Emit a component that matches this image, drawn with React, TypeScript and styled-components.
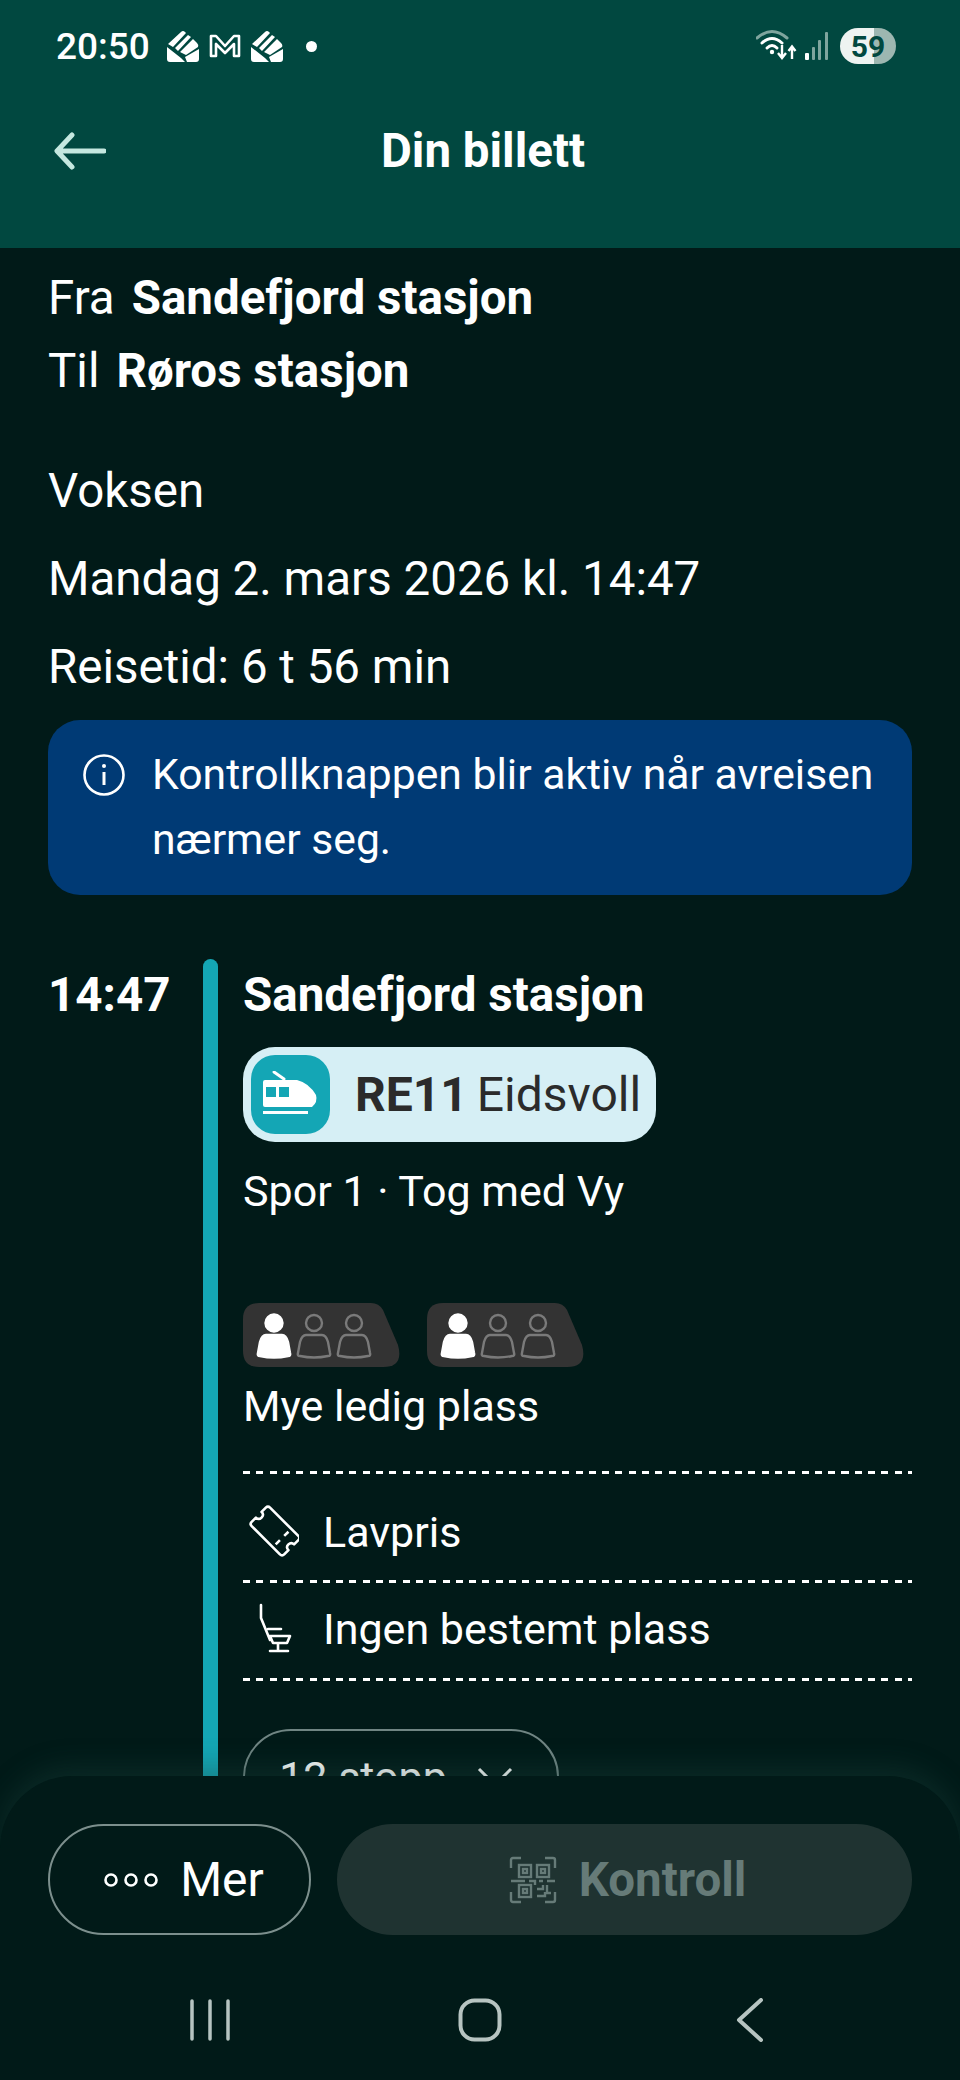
import React from 'react';
import styled, { createGlobalStyle } from 'styled-components';

const GlobalStyle = createGlobalStyle`
  html, body {
    margin: 0;
    padding: 0;
    background: #011a18;
  }
  * {
    box-sizing: border-box;
  }
`;

const Page = styled.div`
  width: 960px;
  height: 2080px;
  display: flex;
  flex-direction: column;
  overflow: hidden;
  background: #011a18;
  color: #ffffff;
  font-family: Roboto, 'Liberation Sans', sans-serif;
  font-size: 43px;
`;

const Header = styled.header`
  height: 248px;
  flex: none;
  background: #014840;
  display: flex;
  flex-direction: column;
  position: relative;
  z-index: 1;
`;

const StatusBar = styled.div`
  height: 92px;
  padding: 0 64px 0 56px;
  display: flex;
  align-items: center;
  justify-content: space-between;
`;

const StatusGroup = styled.div`
  display: flex;
  align-items: center;
`;

const Clock = styled.span`
  font-size: 37px;
  font-weight: 500;
  margin-right: 17px;
`;

const Battery = styled.div`
  width: 56px;
  height: 36px;
  margin-left: 10px;
  border-radius: 18px;
  background: linear-gradient(90deg, #eef3f1 0 60%, #9db7b1 60% 100%);
  color: #014840;
  font-size: 30px;
  font-weight: 700;
  display: flex;
  align-items: center;
  justify-content: center;
`;

const TitleBar = styled.div`
  height: 118px;
  padding: 0 48px 0 54px;
  display: flex;
  align-items: center;
  position: relative;
`;

const Title = styled.h1`
  flex: 1;
  margin: 0 0 0 -52px;
  text-align: center;
  font-size: 47.5px;
  font-weight: 700;
`;

const Content = styled.main`
  flex: 1;
  min-height: 0;
  overflow: hidden;
  padding: 14px 48px 0;
`;

const RouteLine = styled.div`
  height: 73px;
  line-height: 73px;
  font-size: 47.5px;
  display: flex;
  gap: 17px;
`;

const Strong = styled.strong`
  font-weight: 700;
`;

const MetaList = styled.div`
  margin-top: 39px;
  font-size: 47.5px;
`;

const Meta = styled.div`
  height: 88px;
  line-height: 88px;
`;

const Notice = styled.div`
  margin-top: 9px;
  height: 175px;
  padding: 22px 20px 0 35px;
  border-radius: 32px;
  background: #003a75;
  font-size: 42.7px;
  display: flex;
  gap: 27px;
  line-height: 65px;
`;

const NoticeIcon = styled.svg`
  flex: none;
  width: 42px;
  height: 42px;
  margin-top: 12px;
`;

const Timeline = styled.section`
  margin-top: 64px;
  display: grid;
  grid-template-columns: 155px 15px 1fr;
`;

const Time = styled.div`
  font-size: 47.5px;
  font-weight: 700;
  line-height: 73px;
`;

const Rail = styled.div`
  background: #14a6b5;
  border-radius: 8px 8px 0 0;
`;

const Leg = styled.div`
  padding-left: 25px;
`;

const Stop = styled.div`
  font-size: 47.5px;
  font-weight: 700;
  line-height: 73px;
`;

const LinePill = styled.div`
  margin-top: 15px;
  width: 413px;
  height: 95px;
  padding: 8px;
  border-radius: 32px;
  background: #d6eff5;
  color: #2b2b2b;
  font-size: 48px;
  word-spacing: -3px;
  display: flex;
  align-items: center;
  gap: 25px;
  white-space: nowrap;
`;

const LineIcon = styled.div`
  width: 79px;
  height: 79px;
  border-radius: 24px;
  background: #14a6b5;
  display: flex;
  align-items: center;
  justify-content: center;
`;

const LineText = styled.span`
  font-weight: 400;
  & b {
    font-weight: 700;
  }
`;

const Platform = styled.div`
  margin-top: 13px;
  line-height: 72px;
`;

const CrowdRow = styled.div`
  margin-top: 76px;
  display: flex;
  gap: 26px;
`;

const CrowdText = styled.div`
  margin-top: 9px;
  line-height: 60px;
  padding-bottom: 35px;
`;

const dashes = `repeating-linear-gradient(90deg, #ffffff 0 7px, transparent 7px 13.3px) top left / 100% 3px no-repeat`;

const InfoRow = styled.div<{ $first?: boolean }>`
  background: ${dashes};
  height: ${(p) => (p.$first ? 109 : 98)}px;
  padding-top: ${(p) => (p.$first ? 12 : 0)}px;
  display: flex;
  align-items: center;
  gap: 24px;
`;

const InfoIcon = styled.svg`
  flex: none;
  width: 56px;
  height: 56px;
`;

const RowsEnd = styled.div`
  height: 3px;
  background: ${dashes};
`;

const StopsButton = styled.button`
  margin-top: 48px;
  width: 316px;
  height: 96px;
  padding: 0 10px 0 0;
  border: 2px solid #708583;
  border-radius: 48px;
  background: transparent;
  color: #ffffff;
  font: inherit;
  display: flex;
  align-items: center;
  justify-content: center;
  gap: 30px;
`;

const BottomPanel = styled.div`
  flex: none;
  height: 304px;
  position: relative;
  z-index: 1;
  background: #011a18;
  border-radius: 72px 72px 0 0;
  box-shadow: 0 -10px 26px rgba(30, 70, 64, 0.35);
  padding: 48px 48px 0;
`;

const Actions = styled.div`
  display: flex;
  gap: 26px;
`;

const MoreButton = styled.button`
  width: 263px;
  height: 111px;
  padding: 0 0 0 8px;
  border: 2px solid #7c8f8d;
  border-radius: 56px;
  background: transparent;
  color: #ffffff;
  font: inherit;
  font-size: 48px;
  display: flex;
  align-items: center;
  justify-content: center;
  gap: 21px;
`;

const ControlButton = styled.button`
  flex: 1;
  height: 111px;
  padding: 0 0 0 6px;
  border: none;
  border-radius: 56px;
  background: #1f3331;
  color: #667b78;
  font: inherit;
  font-size: 47.5px;
  font-weight: 700;
  display: flex;
  align-items: center;
  justify-content: center;
  gap: 22px;
`;

const NavBar = styled.nav`
  margin-top: 40px;
  height: 90px;
  display: flex;
  align-items: center;
  justify-content: center;
`;

const NavSlot = styled.div`
  width: 270px;
  display: flex;
  justify-content: center;
`;

const Dot = styled.span`
  width: 11px;
  height: 11px;
  margin-left: 23px;
  border-radius: 50%;
  background: #fff;
`;

const HandIcon = () => (
  <svg width="32" height="32" viewBox="0 0 32 32">
    <path d="M1 14 L14 2 Q16 0 18 2 L19 3 L6 17 Z M8 18 L21 5 L24 7 L11 21 Z M13 22 L26 9 L30 13 Q32 15 31 17 L19 25 Z" fill="#fff" />
    <path d="M0 17 L14 28 L18 32 L3 32 Q0 32 0 29 Z M20 32 L18 27 L32 19 L32 29 Q32 32 29 32 Z" fill="#fff" />
  </svg>
);

const MailIcon = () => (
  <svg width="32" height="24" viewBox="0 0 32 24" style={{ margin: '0 10px' }}>
    <path d="M2 22 V2 H7 L16 12 L25 2 H30 V22 H25 V10 L16 19 L7 10 V22 Z" fill="none" stroke="#fff" strokeWidth="2.6" strokeLinejoin="round" />
  </svg>
);

const WifiIcon = () => (
  <svg width="42" height="36" viewBox="0 0 42 36">
    <path d="M1 10 Q16 -3 31 10" fill="none" stroke="#7fa59e" strokeWidth="3" strokeLinecap="round" />
    <path d="M6 15 Q16 6 26 15" fill="none" stroke="#fff" strokeWidth="3" strokeLinecap="round" />
    <path d="M11 20 Q16 15 21 20" fill="none" stroke="#fff" strokeWidth="3" strokeLinecap="round" />
    <circle cx="16" cy="24" r="2.2" fill="#fff" />
    <path d="M26 17 V29 M22 25 L26 30 L30 25" fill="none" stroke="#fff" strokeWidth="2.4" />
    <path d="M36 31 V19 M32.5 23 L36 18.5 L39.5 23" fill="none" stroke="#fff" strokeWidth="2.4" />
  </svg>
);

const SignalIcon = () => (
  <svg width="26" height="30" viewBox="0 0 26 30" style={{ marginLeft: 6 }}>
    <rect x="1" y="22" width="4" height="7" rx="1" fill="#fff" />
    <rect x="8" y="16" width="3" height="13" rx="1" fill="#7fa59e" />
    <rect x="14" y="9" width="3" height="20" rx="1" fill="#7fa59e" />
    <rect x="21" y="1" width="3" height="28" rx="1" fill="#7fa59e" />
  </svg>
);

const Person = ({ x, filled }: { x: number; filled: boolean }) => (
  <g
    transform={`translate(${x} 0)`}
    fill={filled ? '#fff' : 'none'}
    stroke={filled ? '#fff' : '#7a7a7a'}
    strokeWidth="2.4"
  >
    <circle cx="17" cy="19" r={filled ? 8.5 : 8} />
    <path d="M9 31 Q5 31 3 38 L1 49 Q0 52 3 52 Q17 55 31 52 Q34 52 33 49 L31 38 Q29 31 25 31 Z" />
  </g>
);

const CrowdChip = () => (
  <svg width="158" height="64" viewBox="0 0 158 64">
    <path d="M16 0 H128 Q136 0 140 7 L155 42 Q161 64 140 64 H16 Q0 64 0 48 V16 Q0 0 16 0 Z" fill="#333333" />
    <g transform="translate(14 1)">
      <Person x={0} filled />
      <Person x={40} filled={false} />
      <Person x={80} filled={false} />
    </g>
  </svg>
);

const App: React.FC = () => {
  return (
    <Page>
      <GlobalStyle />
      <Header>
        <StatusBar>
          <StatusGroup>
            <Clock>20:50</Clock>
            <HandIcon />
            <MailIcon />
            <HandIcon />
            <Dot />
          </StatusGroup>
          <StatusGroup>
            <WifiIcon />
            <SignalIcon />
            <Battery>59</Battery>
          </StatusGroup>
        </StatusBar>
        <TitleBar>
          <svg width="52" height="40" viewBox="0 0 52 40">
            <path d="M50 20 H4 M18 4 L3 20 L18 36" fill="none" stroke="#c5e8e0" strokeWidth="5" strokeLinecap="round" strokeLinejoin="round" />
          </svg>
          <Title>Din billett</Title>
        </TitleBar>
      </Header>

      <Content>
        <RouteLine>
          Fra <Strong>Sandefjord stasjon</Strong>
        </RouteLine>
        <RouteLine>
          Til <Strong>Røros stasjon</Strong>
        </RouteLine>

        <MetaList>
          <Meta>Voksen</Meta>
          <Meta>Mandag 2. mars 2026 kl. 14:47</Meta>
          <Meta>Reisetid: 6 t 56 min</Meta>
        </MetaList>

        <Notice>
          <NoticeIcon viewBox="0 0 42 42">
            <circle cx="21" cy="21" r="19.5" fill="none" stroke="#fff" strokeWidth="2.6" />
            <path d="M21 18 V31" stroke="#fff" strokeWidth="3" />
            <circle cx="21" cy="12" r="2" fill="#fff" />
          </NoticeIcon>
          <span>Kontrollknappen blir aktiv når avreisen nærmer seg.</span>
        </Notice>

        <Timeline>
          <Time>14:47</Time>
          <Rail />
          <Leg>
            <Stop>Sandefjord stasjon</Stop>
            <LinePill>
              <LineIcon>
                <svg width="56" height="48" viewBox="0 0 56 48">
                  <path d="M11 1 L21 8" stroke="#fff" strokeWidth="3" strokeLinecap="round" />
                  <path d="M2 9 H34 Q46 12 53 24 Q55 31 49 36 H2 Q0 36 0 34 V11 Q0 9 2 9 Z" fill="#fff" />
                  <rect x="3" y="16" width="10" height="10" fill="#14a6b5" />
                  <rect x="16" y="16" width="10" height="10" fill="#14a6b5" />
                  <rect x="0" y="40" width="45" height="3" fill="#fff" />
                </svg>
              </LineIcon>
              <LineText>
                <b>RE11</b> Eidsvoll
              </LineText>
            </LinePill>
            <Platform>Spor 1 · Tog med Vy</Platform>
            <CrowdRow>
              <CrowdChip />
              <CrowdChip />
            </CrowdRow>
            <CrowdText>Mye ledig plass</CrowdText>
            <InfoRow $first>
              <InfoIcon viewBox="0 0 56 56">
                <g transform="translate(32 27) rotate(45)" fill="none" stroke="#fff" strokeWidth="2.6" strokeLinejoin="round">
                  <path d="M-20 -13 H20 Q23 -13 23 -10 V-4 Q19 -4 19 0 Q19 4 23 4 V10 Q23 13 20 13 H-20 Q-23 13 -23 10 V4 Q-19 4 -19 0 Q-19 -4 -23 -4 V-10 Q-23 -13 -20 -13 Z" />
                  <path d="M10 -9 V-3 M10 3 V9" />
                </g>
              </InfoIcon>
              Lavpris
            </InfoRow>
            <InfoRow>
              <InfoIcon viewBox="0 0 56 56">
                <path
                  d="M18 4 V17 L27 39 M25 28 H38 M27 35 H47 L44 42 H30 L27 35 M35 42 V50 M27 50 H45"
                  fill="none"
                  stroke="#fff"
                  strokeWidth="2.6"
                  strokeLinecap="round"
                  strokeLinejoin="round"
                />
              </InfoIcon>
              Ingen bestemt plass
            </InfoRow>
            <RowsEnd />
            <StopsButton>
              12 stopp
              <svg width="36" height="20" viewBox="0 0 36 20">
                <path d="M2 2 L18 18 L34 2" fill="none" stroke="#fff" strokeWidth="3" />
              </svg>
            </StopsButton>
          </Leg>
        </Timeline>
      </Content>

      <BottomPanel>
        <Actions>
          <MoreButton>
            <svg width="56" height="16" viewBox="0 0 56 16">
              <circle cx="8" cy="8" r="5.5" fill="none" stroke="#fff" strokeWidth="2.6" />
              <circle cx="28" cy="8" r="5.5" fill="none" stroke="#fff" strokeWidth="2.6" />
              <circle cx="48" cy="8" r="5.5" fill="none" stroke="#fff" strokeWidth="2.6" />
            </svg>
            Mer
          </MoreButton>
          <ControlButton>
            <svg width="48" height="48" viewBox="0 0 48 48" fill="none" stroke="#667b78" strokeWidth="2.4">
              <path d="M2 12 V4 Q2 2 4 2 H12 M36 2 H44 Q46 2 46 4 V12 M46 36 V44 Q46 46 44 46 H36 M12 46 H4 Q2 46 2 44 V36" />
              <rect x="10" y="9" width="12" height="12" />
              <rect x="14" y="13" width="4" height="4" />
              <rect x="28" y="9" width="12" height="12" />
              <rect x="32" y="13" width="4" height="4" />
              <rect x="10" y="29" width="12" height="12" />
              <rect x="14" y="33" width="4" height="4" />
              <path d="M2 25 H16 M20 25 H26 V29 M30 25 H34 M38 25 H46 M28 33 H34 V29 M38 29 V37 H42 M28 40 H36 V36" />
            </svg>
            Kontroll
          </ControlButton>
        </Actions>
        <NavBar>
          <NavSlot>
            <svg width="42" height="42" viewBox="0 0 42 42">
              <path d="M3 2 V40 M21 2 V40 M39 2 V40" stroke="#b7c4c1" strokeWidth="3.5" strokeLinecap="round" />
            </svg>
          </NavSlot>
          <NavSlot>
            <svg width="44" height="44" viewBox="0 0 44 44">
              <rect x="2.5" y="2.5" width="39" height="39" rx="14" fill="none" stroke="#b7c4c1" strokeWidth="4" />
            </svg>
          </NavSlot>
          <NavSlot>
            <svg width="30" height="44" viewBox="0 0 30 44">
              <path d="M26 2 L4 22 L26 42" fill="none" stroke="#b7c4c1" strokeWidth="4" strokeLinecap="round" strokeLinejoin="round" />
            </svg>
          </NavSlot>
        </NavBar>
      </BottomPanel>
    </Page>
  );
};

export default App;
